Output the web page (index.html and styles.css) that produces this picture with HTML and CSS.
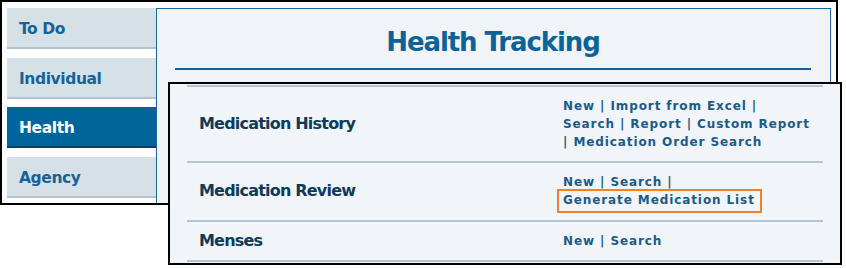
FILE: index.html
```html
<!DOCTYPE html>
<html lang="en">
<head>
<meta charset="utf-8">
<title>Health Tracking</title>
<link rel="stylesheet" href="styles.css">
</head>
<body>
<div class="stage">
  <div class="frame">
    <nav class="tabs">
      <div class="tab">To Do</div>
      <div class="tab">Individual</div>
      <div class="tab active">Health</div>
      <div class="tab">Agency</div>
    </nav>
    <main class="panel">
      <h1 class="title">Health Tracking</h1>
      <div class="rule"></div>
    </main>
  </div>
  <section class="popup">
    <div class="row">
      <div class="label">Medication History</div>
      <div class="links"><a>New</a> | <a>Import from Excel</a> | <a>Search</a> | <a>Report</a> | <a>Custom Report</a> | <a>Medication Order Search</a></div>
    </div>
    <div class="row">
      <div class="label">Medication Review</div>
      <div class="links"><a>New</a> | <a>Search</a> | <a class="hl">Generate Medication List</a></div>
    </div>
    <div class="row">
      <div class="label">Menses</div>
      <div class="links"><a>New</a> | <a>Search</a></div>
    </div>
  </section>
</div>
</body>
</html>
```

FILE: styles.css
```css
html, body {
  margin: 0;
  padding: 0;
  background: #ffffff;
}
body {
  width: 846px;
  height: 268px;
  overflow: hidden;
  font-family: "DejaVu Sans", Verdana, sans-serif;
  font-weight: bold;
}
.stage {
  position: relative;
  width: 846px;
  height: 268px;
}
.frame {
  box-sizing: border-box;
  width: 838px;
  height: 205px;
  border: 2px solid #000;
  padding: 6px 5px 0 5px;
  display: flex;
  align-items: stretch;
  background: #fff;
}
.tabs {
  width: 149px;
  flex: none;
  display: flex;
  flex-direction: column;
  gap: 8.67px;
}
.tab {
  height: 36px;
  line-height: 36px;
  padding-top: 3px;
  border-bottom: 2px solid #b3c4cf;
  background: #d6e0e7;
  color: #16639a;
  font-size: 15.5px;
  letter-spacing: -0.4px;
  padding-left: 12px;
}
.tab.active {
  background: #00659b;
  border-bottom-color: #00466c;
  color: #ffffff;
}
.panel {
  flex: 1;
  background: #f0f4f8;
  border: 1px solid #1b6a9b;
  border-bottom: none;
  padding: 18px 19px 0 18px;
}
.title {
  margin: 0;
  text-align: center;
  font-size: 26px;
  line-height: 30px;
  letter-spacing: -1.1px;
  color: #0b639a;
}
.rule {
  margin-top: 11px;
  height: 2px;
  background: #0b639a;
}
.popup {
  position: absolute;
  left: 168px;
  top: 82px;
  box-sizing: border-box;
  width: 674px;
  height: 183px;
  border: 2px solid #000;
  background: #f1f4f8;
  padding: 1px 17px 0 17px;
}
.popup::before {
  content: "";
  display: block;
  height: 2px;
  background: #b3c6d1;
}
.row {
  display: grid;
  grid-template-columns: 364px 249px;
  align-items: center;
  padding: 10px 0 10px 12px;
  border-bottom: 2px solid #b3c6d1;
}
.row:nth-child(2) {
  padding-bottom: 11px;
}
.label {
  font-size: 16px;
  line-height: 18px;
  letter-spacing: -0.8px;
  color: #0e3a5c;
}
.links {
  font-size: 12px;
  line-height: 18px;
  letter-spacing: 0.9px;
  color: #1b5b8b;
}
.links a {
  color: #1b5b8b;
  text-decoration: none;
}
.hl {
  position: relative;
  display: inline-block;
  white-space: nowrap;
}
.hl::after {
  content: "";
  position: absolute;
  left: -6px;
  right: -7px;
  top: -2px;
  bottom: -4px;
  border: 2px solid #f0832a;
}
```
